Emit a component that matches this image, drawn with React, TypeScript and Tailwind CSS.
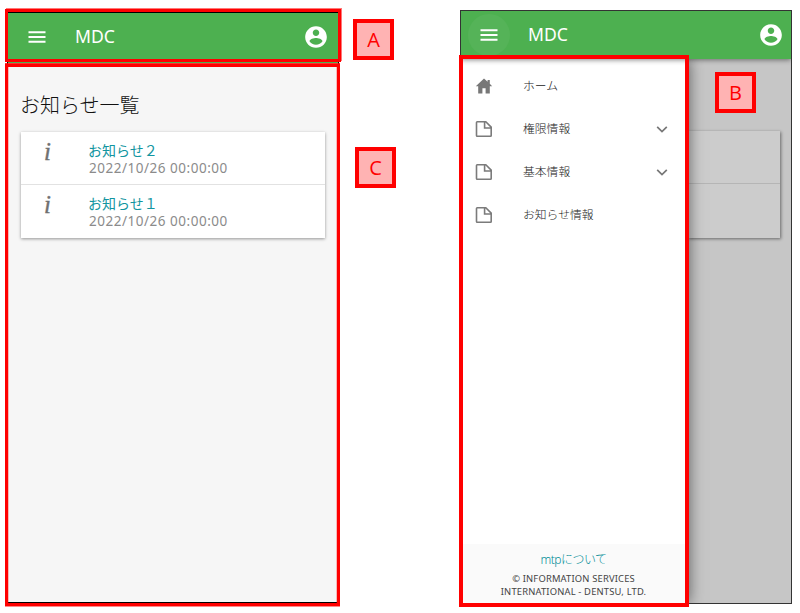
import type { ReactNode } from "react";

const JP = "font-['Noto_Sans','Noto_Sans_CJK_JP',sans-serif]";

function MenuIcon() {
  return (
    <svg className="block h-[18px] w-[18px]" viewBox="0 0 18 18" fill="#fff">
      <path d="M0.5 3.2h17v2h-17zM0.5 8h17v2h-17zM0.5 12.8h17v2h-17z" />
    </svg>
  );
}

function AccountIcon() {
  return (
    <svg className="block h-[26px] w-[26px]" viewBox="0 0 24 24" fill="#fff">
      <path d="M12 2C6.48 2 2 6.48 2 12s4.48 10 10 10 10-4.48 10-10S17.52 2 12 2zm0 3c1.66 0 3 1.34 3 3s-1.34 3-3 3-3-1.34-3-3 1.34-3 3-3zm0 14.2c-2.5 0-4.71-1.28-6-3.22.03-1.99 4-3.08 6-3.08 1.99 0 5.97 1.09 6 3.08-1.29 1.94-3.5 3.22-6 3.22z" />
    </svg>
  );
}

function HomeIcon() {
  return (
    <svg className="block h-4 w-[18px]" viewBox="0 0 18 16" fill="#777">
      <path d="M9 0.4L0.8 8.2h2.4v7.2h4.2v-5.2h3.2v5.2h4.2V8.2h2.4L14.8 5.8V2h-2.2v1.8z" />
    </svg>
  );
}

function FileIcon() {
  return (
    <svg className="block h-[18px] w-[18px]" viewBox="0 0 18 18" fill="none" stroke="#7b7b7b" strokeWidth="1.6">
      <path d="M2.2 1.8h8.6l5.4 5.4v8.3q0 .7-.7.7H2.2q-.7 0-.7-.7V2.5q0-.7.7-.7zM9.6 2v6h6.4" />
    </svg>
  );
}

function Chevron() {
  return (
    <svg className="block h-3 w-3" viewBox="0 0 12 12" fill="none" stroke="#777" strokeWidth="1.7">
      <path d="M1.2 3.8L6 8.5l4.8-4.7" />
    </svg>
  );
}

function Notice({ title }: { title: string }) {
  return (
    <div className="flex h-[53px] border-b border-[#e2e2e2] last:border-b-0">
      <div className="w-[68px] pl-[23px] pt-[6px] font-['Liberation_Serif',serif] text-[25px] italic leading-7 text-[#707070] [-webkit-text-stroke:0.4px_#707070]">i</div>
      <div>
        <div className="-ml-px pt-[10px] text-[14px] leading-[18px] text-[#1295a0]">{title}</div>
        <div className="whitespace-nowrap text-[13.5px] leading-[16px] tracking-[0.52px] text-[#8b8b8b]">2022/10/26 00:00:00</div>
      </div>
    </div>
  );
}

function NavRow({ icon, label, expandable = false }: { icon: ReactNode; label: string; expandable?: boolean }) {
  return (
    <div className="flex h-[43px] items-center pl-[14px] pr-[20px]">
      <div className="w-[48px]">{icon}</div>
      <span className="flex-1 pb-[2px] text-[11.8px] font-light leading-5 text-[#222]">{label}</span>
      {expandable && <Chevron />}
    </div>
  );
}

function Tag({ letter, place }: { letter: string; place: string }) {
  return (
    <div className={`absolute flex h-[41px] w-[41px] items-center justify-center border-4 border-[#f00] bg-[#ffb3b3] font-['Open_Sans',sans-serif] text-[20px] leading-none text-[#f00] ${place}`}>
      {letter}
    </div>
  );
}

export default function App() {
  return (
    <div className={`relative flex h-[613px] w-[800px] items-start overflow-hidden bg-white ${JP}`}>
      <section className="ml-[7px] mt-3 flex h-[591px] w-[332px] flex-col border border-black bg-[#f6f6f6]">
        <header className="flex h-[50px] items-center bg-[#4db050] pb-[3px] pl-[20px] pr-[9px]">
          <MenuIcon />
          <span className="ml-[29px] flex-1 pb-[2px] text-[17.6px] leading-6 text-white">MDC</span>
          <AccountIcon />
        </header>
        <main className="px-[13px] pt-[29px]">
          <h1 className="-ml-px text-[20px] font-light leading-7 text-[#111]">お知らせ一覧</h1>
          <div className="mt-[12px] w-[304px] bg-white shadow-[0_1px_3px_#0006]">
            <Notice title="お知らせ２" />
            <Notice title="お知らせ１" />
          </div>
        </main>
      </section>

      <section className="ml-[121px] mt-[10px] flex h-[594px] w-[332px] flex-col overflow-hidden border border-[#333] bg-[#c6c6c6]">
        <header className="relative z-10 flex h-[48px] shrink-0 items-center bg-[#4db050] pl-[7px] pr-[7px] shadow-[0_1px_5px_#0007]">
          <div className="flex h-[42px] w-[42px] items-center justify-center rounded-full bg-[#55b358] pb-px">
            <MenuIcon />
          </div>
          <span className="ml-[18px] flex-1 pb-[2px] text-[17.6px] leading-6 text-white">MDC</span>
          <AccountIcon />
        </header>
        <div className="flex min-h-0 flex-1">
          <nav className="relative flex w-[227px] flex-col bg-white pt-[5px] shadow-[1px_0_14px_#0008]">
            <NavRow icon={<HomeIcon />} label="ホーム" />
            <NavRow icon={<FileIcon />} label="権限情報" expandable />
            <NavRow icon={<FileIcon />} label="基本情報" expandable />
            <NavRow icon={<FileIcon />} label="お知らせ情報" />
            <footer className="mt-auto h-[59px] bg-[#fafafa] pt-[6px] text-center">
              <div className="-ml-[2px] text-[12px] font-light leading-5 tracking-[-0.5px] text-[#008c96]">mtpについて</div>
              <div className="-ml-[2px] whitespace-nowrap pt-[2px] text-[9.4px] leading-[13px] tracking-[0.17px] text-[#444]">
                © INFORMATION SERVICES<br />INTERNATIONAL - DENTSU, LTD.
              </div>
            </footer>
          </nav>
          <div className="mt-[72px] h-[107px] w-[92px] bg-[#cccccc] shadow-[1px_1px_3px_#0007]">
            <div className="h-[53px] border-b border-[#b5b5b5]" />
          </div>
        </div>
      </section>

      <div className="absolute left-[5px] top-[9px] h-[53px] w-[336px] border-[3px] border-[#f00] shadow-[1px_-1px_0_#ff000088]" />
      <div className="absolute left-[5px] top-[64px] h-[542px] w-[335px] border-[3px] border-[#f00] shadow-[0_1px_0_#ff000077,0_-1px_0_#ff0000cc,inset_1px_0_0_#ff000040,inset_-1px_0_0_#ff000040]" />
      <div className="absolute left-[459px] top-[55px] z-20 h-[552px] w-[230px] border-4 border-[#f00]" />
      <Tag letter="A" place="left-[353px] top-[19px]" />
      <Tag letter="C" place="left-[355px] top-[147px]" />
      <Tag letter="B" place="left-[715px] top-[72px] z-20" />
    </div>
  );
}
